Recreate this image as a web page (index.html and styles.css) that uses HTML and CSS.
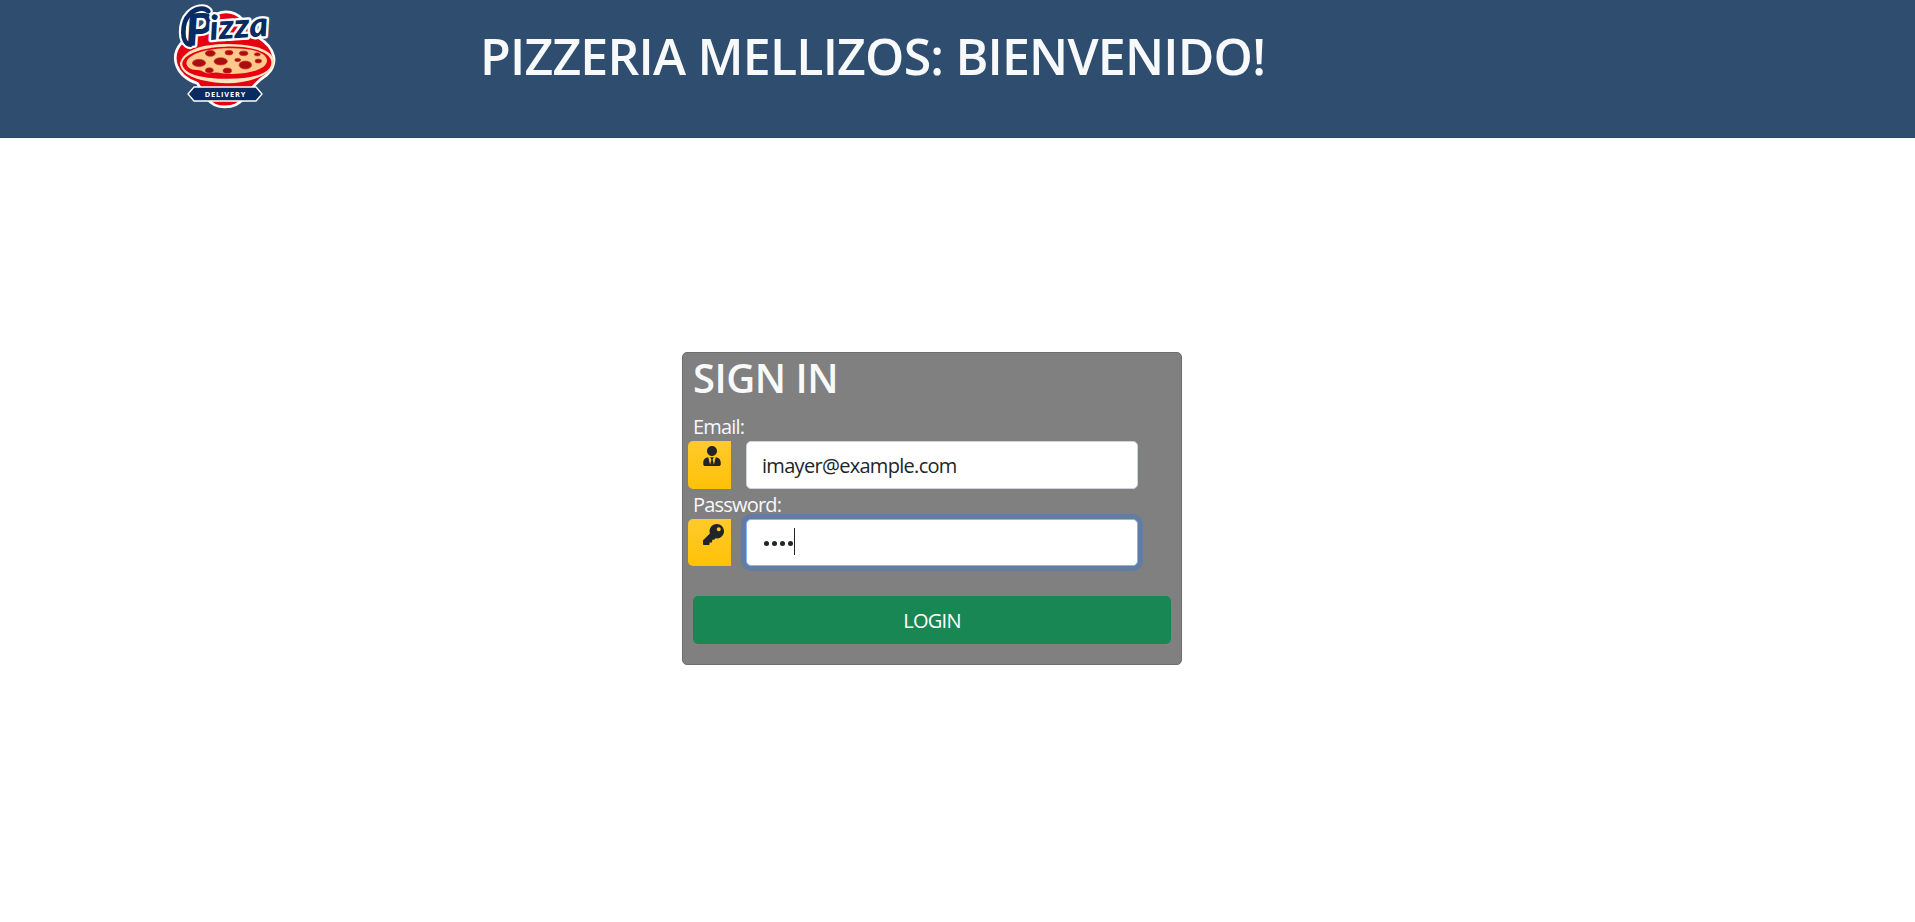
FILE: index.html
```html
<!DOCTYPE html>
<html lang="es">
<head>
<meta charset="utf-8">
<title>Pizzeria Mellizos</title>
<link rel="stylesheet" href="styles.css">
</head>
<body>
<header class="header">
  <svg class="logo" viewBox="0 0 390 345" role="img" aria-label="Pizza Delivery">
    <g stroke="#fff" stroke-width="8" stroke-linejoin="round" fill="#e60012">
      <path d="M150 60C175 28 220 28 247 58L295 112C345 143 358 190 320 225C282 248 272 270 250 296C225 329 165 329 142 296L112 250C46 228 28 170 65 128Z"/>
    </g>
    <path d="M60 190C70 150 126 132 200 132C278 132 337 148 343 184C342 225 271 248 200 250C126 247 62 229 60 190Z" fill="#ffe5bd"/>
    <path d="M67 194C64 166 120 142 195 140C278 136 338 158 334 190C332 221 277 238 194 236C118 235 73 220 67 194Z" fill="#e60012"/>
    <path d="M79 188C88 158 145 146 205 145C273 143 323 156 321 184C316 212 260 222 207 222C183 222 175 214 154 219C132 224 130 209 110 210C91 209 80 202 79 188Z" fill="#ffc98b"/>
    <g fill="#a90f12" stroke="#d93020" stroke-width="2">
      <ellipse cx="151" cy="160" rx="15" ry="9"/><ellipse cx="207" cy="158" rx="12" ry="7"/>
      <ellipse cx="251" cy="160" rx="13" ry="7"/><ellipse cx="292" cy="163" rx="9" ry="5"/>
      <ellipse cx="117" cy="189" rx="20" ry="11"/><ellipse cx="182" cy="184" rx="20" ry="11"/>
      <ellipse cx="233" cy="180" rx="9" ry="5"/><ellipse cx="256" cy="195" rx="19" ry="12"/>
      <ellipse cx="295" cy="183" rx="10" ry="6"/><ellipse cx="148" cy="211" rx="12" ry="8"/>
      <ellipse cx="202" cy="212" rx="13" ry="8"/>
    </g>
    <path d="M91 134C62 132 65 67 88 44C105 25 133 20 145 34" fill="none" stroke="#fff" stroke-width="27" stroke-linecap="round"/>
    <g class="script" transform="rotate(-4 150 110)">
      <text class="script-p" x="77" y="133" textLength="85" lengthAdjust="spacingAndGlyphs">P</text>
      <text class="script-rest" x="150" y="120" textLength="176" lengthAdjust="spacingAndGlyphs">izza</text>
    </g>
    <path d="M91 134C62 132 65 67 88 44C105 25 133 20 145 34" fill="none" stroke="#082c61" stroke-width="14" stroke-linecap="round"/>
    <path d="M102 261H288L306 282L288 303H102L84 282Z" fill="#082c61" stroke="#fff" stroke-width="4"/>
    <text class="ribbon" x="134" y="290" textLength="122">DELIVERY</text>
  </svg>
  <h1 class="title">PIZZERIA MELLIZOS: BIENVENIDO!</h1>
</header>
<main class="main">
  <form class="card">
    <h2 class="heading">SIGN IN</h2>
    <label class="label">Email:</label>
    <div class="row">
      <span class="addon"><svg class="icon-user" viewBox="0 0 448 512"><path d="M224 256c70.7 0 128-57.3 128-128S294.7 0 224 0 96 57.3 96 128s57.3 128 128 128zm95.8 32.6L272 480l-32-136 32-56h-96l32 56-32 136-47.8-191.4C56.9 292 0 350.3 0 422.4V464c0 26.5 21.5 48 48 48h352c26.5 0 48-21.5 48-48v-41.6c0-72.1-56.9-130.4-128.2-133.8z"/></svg></span>
      <div class="field"><span class="email">imayer@example.com</span></div>
    </div>
    <label class="label label-password">Password:</label>
    <div class="row row-password">
      <span class="addon"><svg class="icon-key" viewBox="0 0 512 512"><path d="M512 176c0 97.2-78.8 176-176 176-11.2 0-22.2-1.1-32.8-3.1l-24 27A24 24 0 0 1 261.200 384H224v40c0 13.300-10.700 24-24 24h-40v40c0 13.300-10.700 24-24 24H24c-13.300 0-24-10.700-24-24v-78.100c0-6.400 2.500-12.500 7-17l161.800-161.800C163.100 213.800 160 195.300 160 176 160 78.800 238.800 0 336 0c97.500 0 176 78.500 176 176zM336 128c0 26.500 21.500 48 48 48s48-21.500 48-48-21.500-48-48-48-48 21.500-48 48z"/></svg></span>
      <div class="field focused"><i class="dot"></i><i class="dot"></i><i class="dot"></i><i class="dot"></i><i class="caret"></i></div>
    </div>
    <button class="login" type="button">LOGIN</button>
  </form>
</main>
</body>
</html>
```
FILE: styles.css
```css
* { box-sizing: border-box; }
body { margin: 0; background: #fff; font-family: "Open Sans", "Noto Sans", sans-serif; font-size: 20px; color: #212529; }
.header { display: flex; align-items: flex-start; height: 138px; padding-left: 160px; background: #2f4e6f; border-bottom: 1px solid #294765; }
.logo { width: 130px; height: 115px; flex: none; }
.script { font-family: "Lato", sans-serif; font-weight: 900; font-style: italic; fill: #082c61; stroke: #fff; stroke-width: 14px; stroke-linejoin: round; paint-order: stroke; }
.script-p { font-size: 132px; }
.script-rest { font-size: 102px; }
.ribbon { font: 700 22px "Open Sans", sans-serif; fill: #fff; }
.title { margin: 22px 0 0 190px; font-size: 50px; line-height: 68px; font-weight: 640; color: #f8f9fa; white-space: nowrap; letter-spacing: -0.8px; }
.main { display: flex; padding: 214px 0 0 682px; }
.card { width: 500px; height: 313px; padding: 0 10px 0 5px; background: #808080; border: 1px solid #6d6d6d; border-radius: 5px; }
.heading { margin: 0 0 0 5px; height: 61px; font-size: 40px; line-height: 50px; font-weight: 640; letter-spacing: -0.5px; color: #f8f9fa; }
.label { display: block; height: 27px; margin-left: 5px; line-height: 25px; font-size: 20px; letter-spacing: -0.8px; color: #f8f9fa; }
.label-password { height: 30px; line-height: 32px; }
.row { display: flex; gap: 15px; height: 48px; }
.row-password { height: 47px; }
.addon { width: 43px; padding: 5px 0 0 15px; background: linear-gradient(#ffca2c, #ffc107); border-radius: 5px 0 0 5px; }
.addon svg { display: block; fill: #212529; }
.icon-user { width: 18px; height: 20px; }
.icon-key { width: 21px; height: 21px; }
.field { display: flex; align-items: center; width: 392px; padding-left: 15px; background: #fff; border: 1px solid #ced4da; border-radius: 5px; }
.email { letter-spacing: -0.7px; }
.focused { border-color: #86b7fe; box-shadow: 0 0 0 5px #637ca2; }
.dot { width: 5px; height: 5px; margin: 1px 3px 0 0; border-radius: 50%; background: #212529; }
.dot:first-child { margin-left: 2px; }
.caret { width: 1px; height: 27px; margin: -2px 0 0 -2px; background: #212529; }
.login { display: block; width: 478px; height: 48px; margin: 30px 0 0 5px; padding: 0; border: 0; border-radius: 5px; background: #198754; color: #fff; font: 400 20px "Open Sans", sans-serif; letter-spacing: -0.7px; }
```
